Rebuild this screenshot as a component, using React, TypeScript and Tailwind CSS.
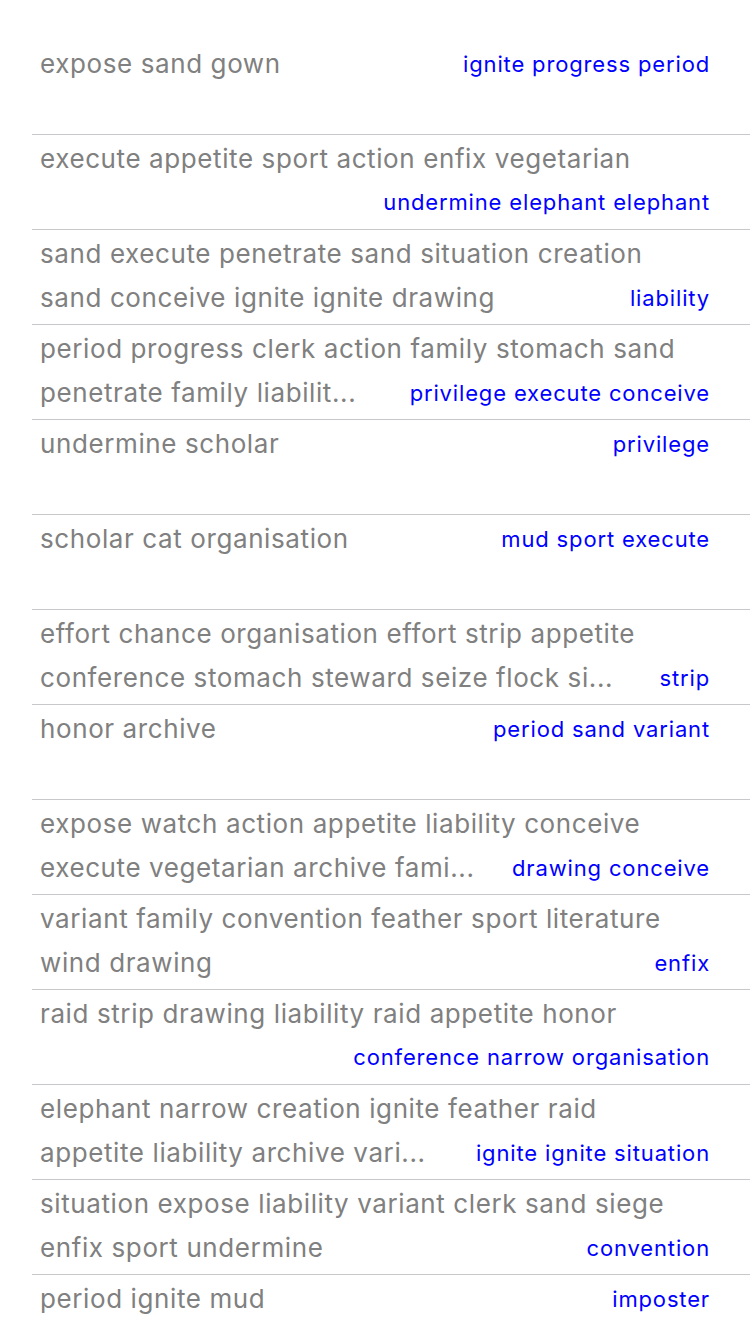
const rows: { lines: string[]; right: string }[] = [
  { lines: ["expose sand gown"], right: "ignite progress period" },
  { lines: ["execute appetite sport action enfix vegetarian", ""], right: "undermine elephant elephant" },
  { lines: ["sand execute penetrate sand situation creation", "sand conceive ignite ignite drawing"], right: "liability" },
  { lines: ["period progress clerk action family stomach sand", "penetrate family liabilit..."], right: "privilege execute conceive" },
  { lines: ["undermine scholar"], right: "privilege" },
  { lines: ["scholar cat organisation"], right: "mud sport execute" },
  { lines: ["effort chance organisation effort strip appetite", "conference stomach steward seize flock si..."], right: "strip" },
  { lines: ["honor archive"], right: "period sand variant" },
  { lines: ["expose watch action appetite liability conceive", "execute vegetarian archive fami..."], right: "drawing conceive" },
  { lines: ["variant family convention feather sport literature", "wind drawing"], right: "enfix" },
  { lines: ["raid strip drawing liability raid appetite honor", ""], right: "conference narrow organisation" },
  { lines: ["elephant narrow creation ignite feather raid", "appetite liability archive vari..."], right: "ignite ignite situation" },
  { lines: ["situation expose liability variant clerk sand siege", "enfix sport undermine"], right: "convention" },
  { lines: ["period ignite mud"], right: "imposter" },
];

function Row({ lines, right }: { lines: string[]; right: string }) {
  return (
    <div className="ml-8 h-[95px] border-b border-[#c8c7cc] pl-2 pr-10 pt-[2px]">
      {lines.map((line, i) => {
        const last = i === lines.length - 1;
        return (
          <div key={i} className="flex items-baseline justify-between gap-5 leading-[44px]">
            <span className="min-w-0 truncate text-[26px] tracking-[0.6px] text-[#808080]">{line}</span>
            {last && (
              <span className="shrink-0 -translate-y-px text-[22px] tracking-[0.85px] text-[#0000ff]">{right}</span>
            )}
          </div>
        );
      })}
    </div>
  );
}

export default function App() {
  return (
    <div className="h-[1334px] overflow-hidden bg-white pt-[40px] font-['Inter',sans-serif]">
      {rows.map((r, i) => (
        <Row key={i} lines={r.lines} right={r.right} />
      ))}
    </div>
  );
}
